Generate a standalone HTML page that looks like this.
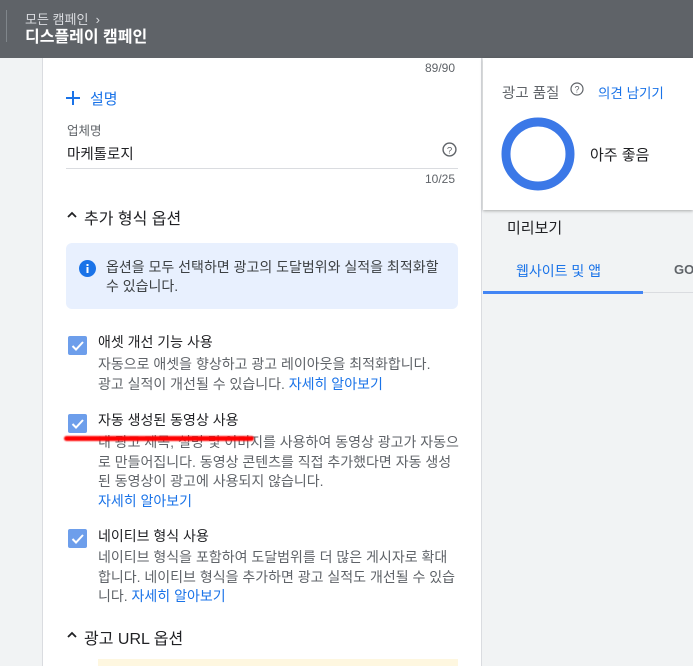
<!DOCTYPE html>
<html><head><meta charset="utf-8"><style>
*{margin:0;padding:0;box-sizing:border-box}
body{width:693px;height:666px;overflow:hidden;background:#f1f3f4;font-family:"Liberation Sans","Noto Sans CJK KR",sans-serif;position:relative;color:#202124}
.a{position:absolute;white-space:nowrap}
.hdr{position:absolute;left:0;top:0;width:693px;height:58px;background:#5f6368}
.card{position:absolute;left:42px;top:58px;width:440px;height:608px;background:#fff;border-left:1px solid #dadce0;border-right:1px solid #dadce0}
.g{color:#5f6368}
.l{color:#1a73e8}
.cb{position:absolute;width:19px;height:19px;background:#6d9eeb;border-radius:2px}
.cb svg{position:absolute;left:2px;top:2px}
.t{font-size:14px;line-height:19px}
.d{font-size:14px;line-height:19.5px;color:#5f6368}
</style></head><body>
<div class="hdr"></div>
<div class="a" style="left:6px;top:10px;width:1px;height:32px;background:#80868b"></div>
<div class="a" style="left:25px;top:9px;font-size:13px;color:#dadce0">모든 캠페인 &nbsp;›</div>
<div class="a" style="left:25px;top:23px;font-size:16px;color:#fff;font-weight:bold">디스플레이 캠페인</div>
<div class="card"></div>
<div class="a g" style="left:425px;top:61px;font-size:12px">89/90</div>
<svg class="a" style="left:66px;top:91px" width="14" height="14"><path d="M7 0V14M0 7H14" stroke="#1a73e8" stroke-width="2"/></svg>
<div class="a l" style="left:90px;top:88px;font-size:15px">설명</div>
<div class="a g" style="left:67px;top:120px;font-size:12.5px">업체명</div>
<div class="a" style="left:67px;top:143px;font-size:14.5px">마케톨로지</div>
<svg class="a" style="left:442px;top:142px" width="15" height="15" viewBox="0 0 14 14"><circle cx="7" cy="7" r="6" fill="none" stroke="#5f6368" stroke-width="1.3"/><text x="7" y="10.5" font-size="9" text-anchor="middle" fill="#5f6368" font-family="Liberation Sans">?</text></svg>
<div class="a" style="left:66px;top:168px;width:392px;height:1px;background:#dadce0"></div>
<div class="a g" style="left:425px;top:172px;font-size:12px">10/25</div>
<svg class="a" style="left:66px;top:210px" width="12" height="10"><path d="M2 7L6 3L10 7" fill="none" stroke="#202124" stroke-width="1.8"/></svg>
<div class="a" style="left:84px;top:205px;font-size:16px">추가 형식 옵션</div>
<div class="a" style="left:66px;top:243px;width:392px;height:66px;background:#e8f0fe;border-radius:6px"></div>
<svg class="a" style="left:79px;top:260px" width="17" height="17"><circle cx="8.5" cy="8.5" r="8.5" fill="#1a73e8"/><rect x="7.5" y="7" width="2" height="6" fill="#fff"/><rect x="7.5" y="4" width="2" height="2" fill="#fff"/></svg>
<div class="a" style="left:106px;top:258px;font-size:14px;line-height:19px;color:#3c4043">옵션을 모두 선택하면 광고의 도달범위와 실적을 최적화할<br>수 있습니다.</div>

<div class="cb" style="left:68px;top:336px"><svg width="15" height="15"><path d="M2.5 8L6 11.5L13 4" fill="none" stroke="#fff" stroke-width="2"/></svg></div>
<div class="a t" style="left:98px;top:333px">애셋 개선 기능 사용</div>
<div class="a d" style="left:98px;top:355px">자동으로 애셋을 향상하고 광고 레이아웃을 최적화합니다.<br>광고 실적이 개선될 수 있습니다. <span class="l">자세히 알아보기</span></div>

<div class="cb" style="left:68px;top:414px"><svg width="15" height="15"><path d="M2.5 8L6 11.5L13 4" fill="none" stroke="#fff" stroke-width="2"/></svg></div>
<div class="a t" style="left:98px;top:411px">자동 생성된 동영상 사용</div>
<div class="a d" style="left:98px;top:433px">내 광고 제목, 설명 및 이미지를 사용하여 동영상 광고가 자동으<br>로 만들어집니다. 동영상 콘텐츠를 직접 추가했다면 자동 생성<br>된 동영상이 광고에 사용되지 않습니다.<br><span class="l">자세히 알아보기</span></div>
<div class="a" style="left:64px;top:436px;width:190px;height:5px;background:#f00;border-radius:3px;filter:blur(0.8px)"></div>

<div class="cb" style="left:68px;top:529px"><svg width="15" height="15"><path d="M2.5 8L6 11.5L13 4" fill="none" stroke="#fff" stroke-width="2"/></svg></div>
<div class="a t" style="left:98px;top:527px">네이티브 형식 사용</div>
<div class="a d" style="left:98px;top:548px">네이티브 형식을 포함하여 도달범위를 더 많은 게시자로 확대<br>합니다. 네이티브 형식을 추가하면 광고 실적도 개선될 수 있습<br>니다. <span class="l">자세히 알아보기</span></div>

<svg class="a" style="left:66px;top:630px" width="12" height="10"><path d="M2 7L6 3L10 7" fill="none" stroke="#202124" stroke-width="1.8"/></svg>
<div class="a" style="left:84px;top:625px;font-size:16px">광고 URL 옵션</div>
<div class="a" style="left:98px;top:659px;width:360px;height:7px;background:#fef7e0"></div>

<div class="a" style="left:483px;top:58px;width:210px;height:152px;background:#fff;box-shadow:0 1px 3px rgba(0,0,0,.3)"></div>
<div class="a g" style="left:502px;top:82px;font-size:14.5px">광고 품질</div>
<svg class="a" style="left:570px;top:82px" width="14" height="14"><circle cx="7" cy="7" r="6" fill="none" stroke="#5f6368" stroke-width="1.2"/><text x="7" y="10.5" font-size="9" text-anchor="middle" fill="#5f6368" font-family="Liberation Sans">?</text></svg>
<div class="a l" style="left:598px;top:82px;font-size:13.5px">의견 남기기</div>
<svg class="a" style="left:501px;top:117px" width="74" height="74"><circle cx="37" cy="37" r="32" fill="none" stroke="#3b78e7" stroke-width="9"/></svg>
<div class="a" style="left:590px;top:144px;font-size:15px">아주 좋음</div>
<div class="a" style="left:507px;top:217px;font-size:15px;color:#202124">미리보기</div>
<div class="a l" style="left:516px;top:261px;font-size:14px">웹사이트 및 앱</div>
<div class="a g" style="left:674px;top:262px;font-size:13px;font-weight:bold">GO</div>
<div class="a" style="left:483px;top:291px;width:160px;height:3px;background:#4285f4"></div>
<div class="a" style="left:643px;top:292px;width:50px;height:1px;background:#dadce0"></div>
</body></html>
